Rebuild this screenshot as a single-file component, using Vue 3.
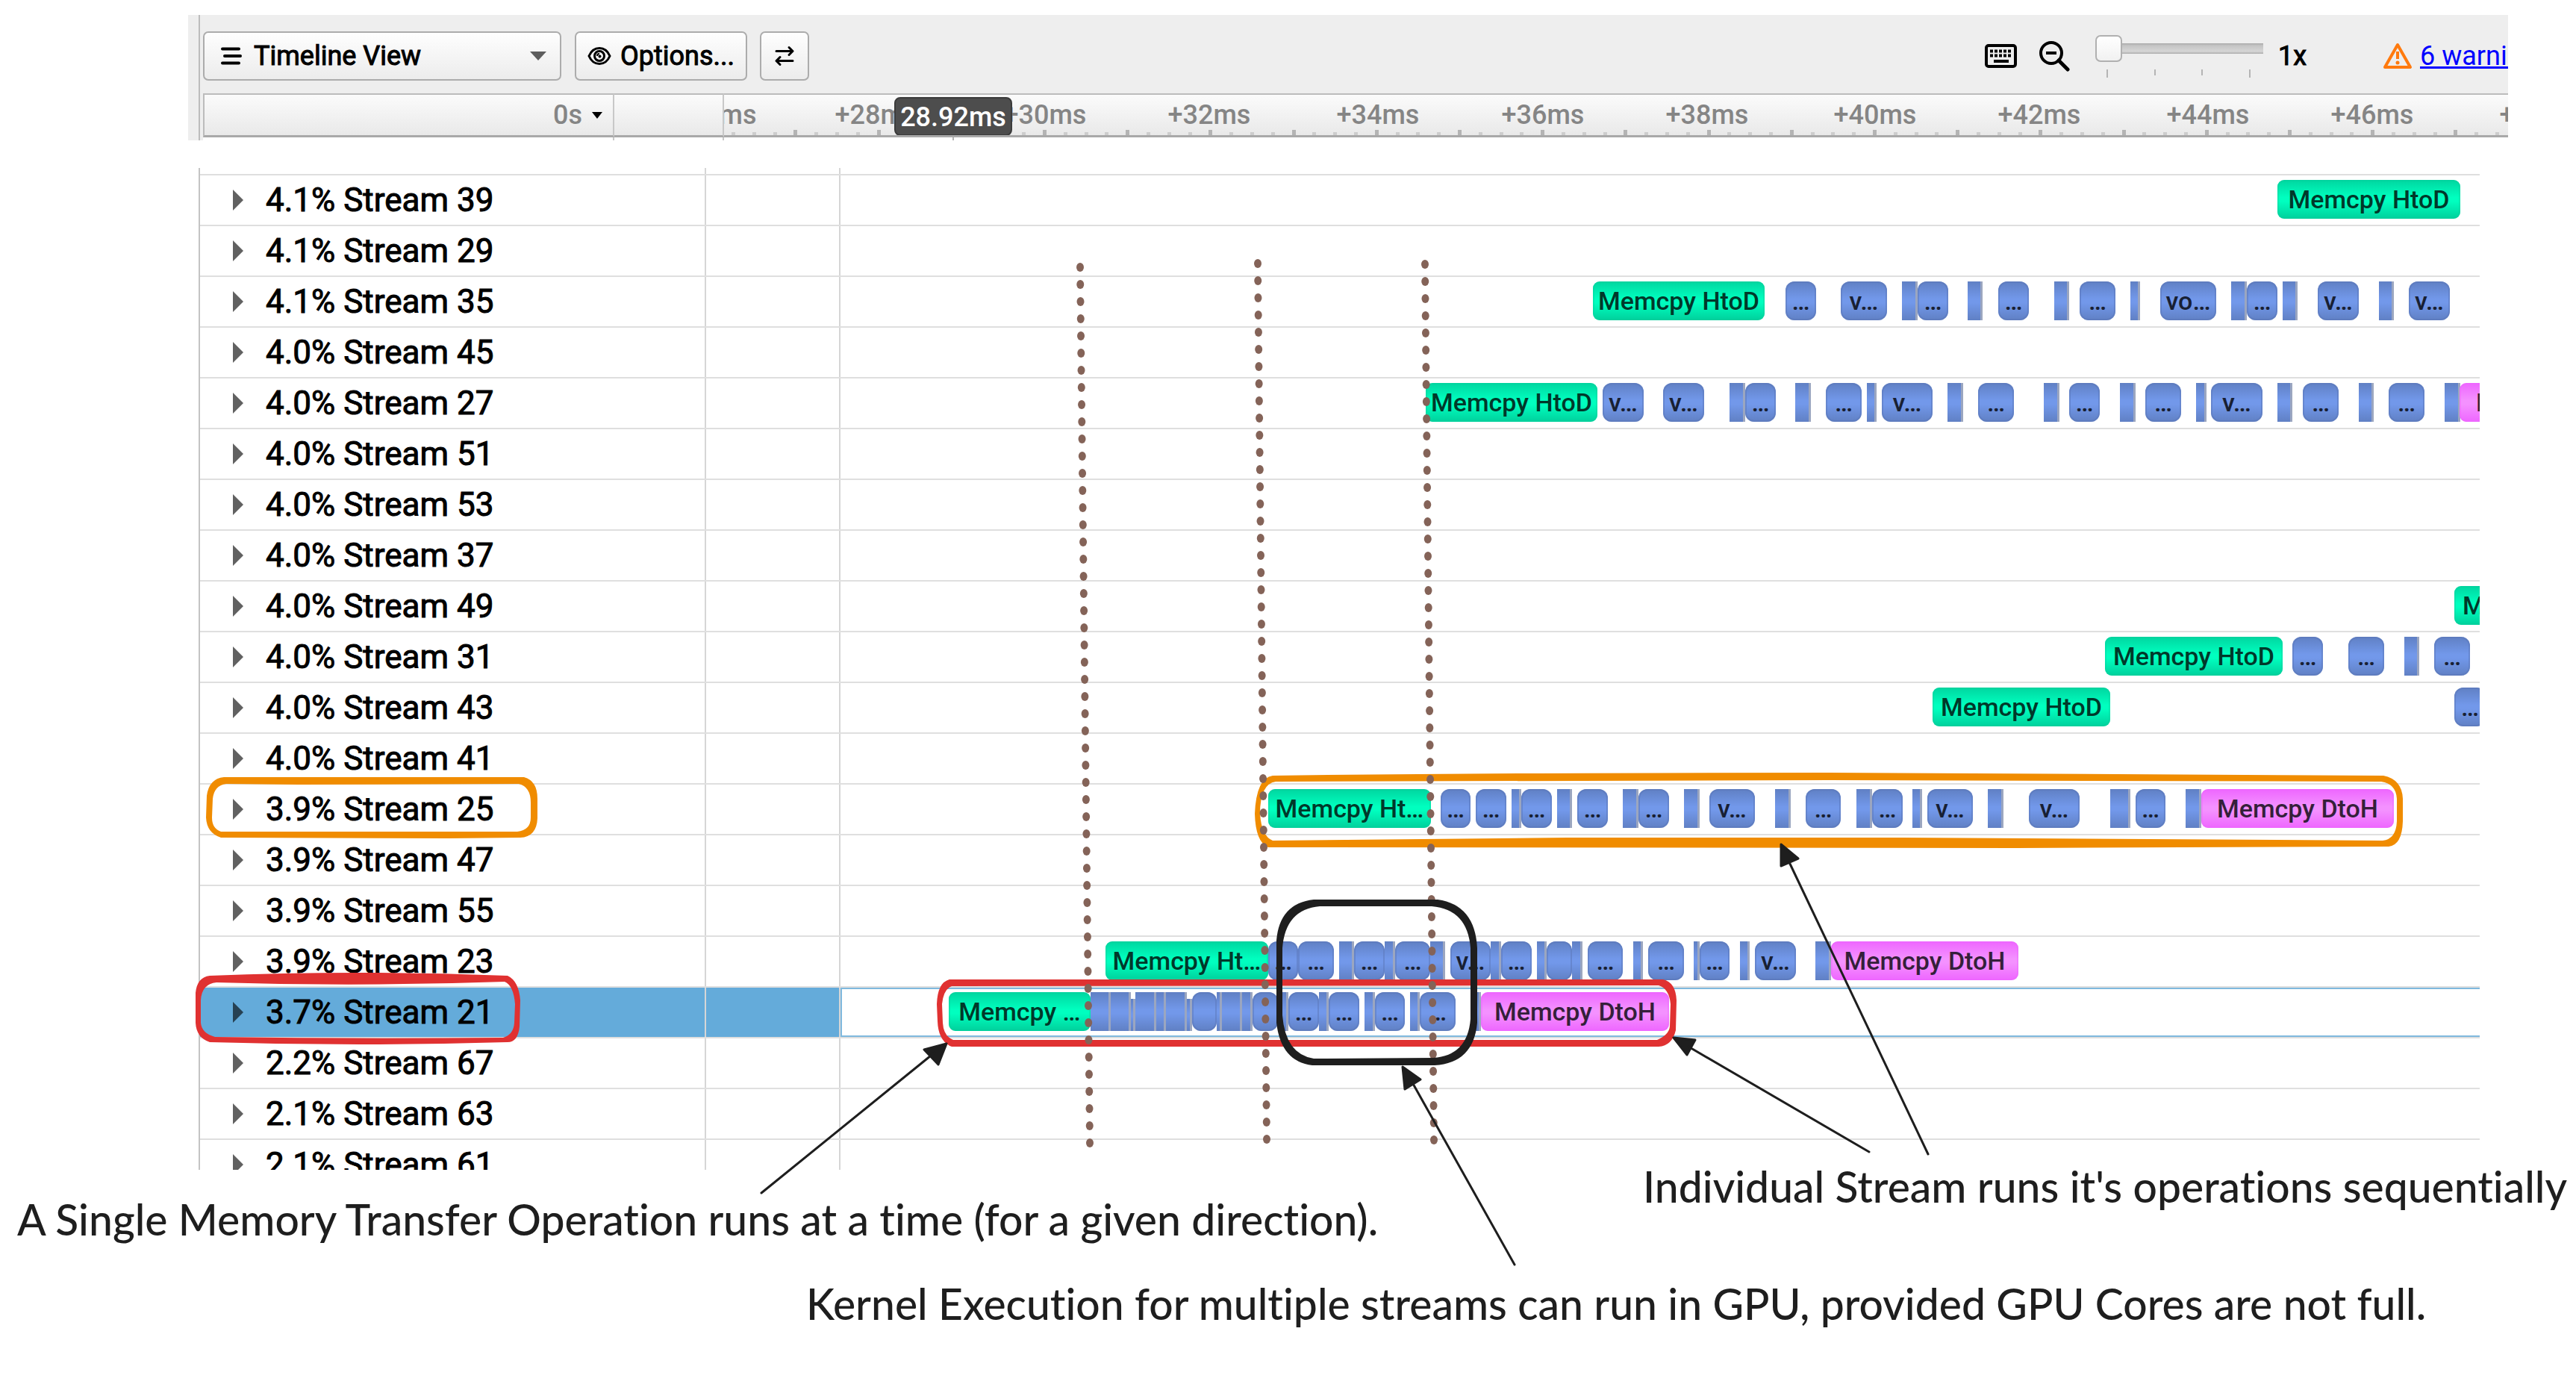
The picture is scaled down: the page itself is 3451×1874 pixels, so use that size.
<script setup>
import { ref } from 'vue'

const view = ref('Timeline View')
const zoom = ref(1)

// Ruler: labels sit on every second millisecond, minor marks every quarter.
const rulerStart = 970
const rulerWidth = 2390
const rulerPos = (x) => ((x - rulerStart) / rulerWidth) * 100 + '%'
const rulerLabels = [
  ['+26ms', 958], ['+28ms', 1174], ['+30ms', 1400], ['+32ms', 1620], ['+34ms', 1846],
  ['+36ms', 2067], ['+38ms', 2287], ['+40ms', 2512], ['+42ms', 2732], ['+44ms', 2958],
  ['+46ms', 3178], ['+48ms', 3404],
]
const ticks = Array.from({ length: 86 }, (_, i) => ({ x: 982 + i * 27.8, major: i % 4 === 3 }))

// Events: [start, end, kind, label]; h = host to device, d = device to host, k = kernel, t = thin kernel.
const trackStart = 1126
const trackWidth = 2196
const eventStyle = ([start, end]) => ({
  left: ((start - trackStart) / trackWidth) * 100 + '%',
  width: ((end - start) / trackWidth) * 100 + '%',
})
const kinds = { h: 'htod', d: 'dtoh', k: 'kernel', t: 'thin', s: 'thin short' }

const streams = [
  { name: '4.1% Stream 39', events: [[3051, 3296, 'h', 'Memcpy HtoD']] },
  { name: '4.1% Stream 29', events: [] },
  { name: '4.1% Stream 35', events: [
    [2134, 2364, 'h', 'Memcpy HtoD'], [2392, 2433, 'k', '…'], [2466, 2528, 'k', 'v…'], [2548, 2569, 't'],
    [2569, 2610, 'k', '…'], [2636, 2656, 't'], [2677, 2718, 'k', '…'], [2752, 2772, 't'], [2786, 2834, 'k', '…'],
    [2854, 2867, 't'], [2894, 2969, 'k', 'vo…'], [2989, 3010, 't'], [3010, 3051, 'k', '…'], [3058, 3078, 't'],
    [3105, 3160, 'k', 'v…'], [3187, 3207, 't'], [3227, 3282, 'k', 'v…']] },
  { name: '4.0% Stream 45', events: [] },
  { name: '4.0% Stream 27', events: [
    [1910, 2140, 'h', 'Memcpy HtoD'], [2147, 2202, 'k', 'v…'], [2228, 2283, 'k', 'v…'], [2317, 2338, 't'],
    [2338, 2379, 'k', '…'], [2405, 2426, 't'], [2446, 2494, 'k', '…'], [2501, 2514, 't'], [2521, 2589, 'k', 'v…'],
    [2609, 2630, 't'], [2650, 2698, 'k', '…'], [2738, 2759, 't'], [2772, 2813, 'k', '…'], [2840, 2861, 't'],
    [2874, 2922, 'k', '…'], [2942, 2956, 't'], [2962, 3031, 'k', 'v…'], [3051, 3071, 't'], [3085, 3133, 'k', '…'],
    [3160, 3180, 't'], [3200, 3248, 'k', '…'], [3275, 3296, 't'], [3295, 3555, 'd', 'Memcpy DtoH']] },
  { name: '4.0% Stream 51', events: [] },
  { name: '4.0% Stream 53', events: [] },
  { name: '4.0% Stream 37', events: [] },
  { name: '4.0% Stream 49', events: [[3288, 3526, 'h', 'Memcpy HtoD']] },
  { name: '4.0% Stream 31', events: [
    [2820, 3058, 'h', 'Memcpy HtoD'], [3071, 3112, 'k', '…'], [3146, 3194, 'k', '…'], [3221, 3241, 't'],
    [3261, 3309, 'k', '…']] },
  { name: '4.0% Stream 43', events: [[2589, 2827, 'h', 'Memcpy HtoD'], [3288, 3330, 'k', '…']] },
  { name: '4.0% Stream 41', events: [] },
  { name: '3.9% Stream 25', events: [
    [1699, 1917, 'h', 'Memcpy Ht…'], [1930, 1970, 'k', '…'], [1977, 2018, 'k', '…'], [2025, 2038, 't'],
    [2038, 2079, 'k', '…'], [2086, 2106, 't'], [2113, 2154, 'k', '…'], [2174, 2195, 't'], [2195, 2236, 'k', '…'],
    [2256, 2277, 't'], [2290, 2351, 'k', 'v…'], [2378, 2399, 't'], [2419, 2466, 'k', '…'], [2487, 2508, 't'],
    [2508, 2549, 'k', '…'], [2562, 2575, 't'], [2582, 2643, 'k', 'v…'], [2663, 2684, 't'], [2718, 2786, 'k', 'v…'],
    [2827, 2854, 't'], [2861, 2901, 'k', '…'], [2928, 2949, 't'], [2949, 3207, 'd', 'Memcpy DtoH']] },
  { name: '3.9% Stream 47', events: [] },
  { name: '3.9% Stream 55', events: [] },
  { name: '3.9% Stream 23', events: [
    [1481, 1699, 'h', 'Memcpy Ht…'], [1699, 1739, 'k', '…'], [1739, 1787, 'k', '…'], [1794, 1814, 't'],
    [1814, 1855, 'k', '…'], [1855, 1869, 't'], [1869, 1916, 'k', '…'], [1916, 1936, 't'], [1943, 1997, 'k', 'v…'],
    [1997, 2011, 't'], [2011, 2052, 'k', '…'], [2059, 2072, 't'], [2072, 2106, 'k', ''], [2106, 2120, 't'],
    [2127, 2174, 'k', '…'], [2188, 2201, 't'], [2208, 2256, 'k', '…'], [2269, 2277, 't'], [2277, 2317, 'k', '…'],
    [2331, 2344, 't'], [2351, 2406, 'k', 'v…'], [2432, 2453, 't'], [2453, 2704, 'd', 'Memcpy DtoH']] },
  { name: '3.7% Stream 21', selected: true, events: [
    [1271, 1461, 'h', 'Memcpy …'], [1461, 1488, 't'], [1488, 1515, 't'], [1515, 1521, 's'], [1521, 1549, 't'],
    [1549, 1562, 't'], [1562, 1590, 't'], [1590, 1597, 's'], [1597, 1630, 'k', ''], [1630, 1637, 't'],
    [1637, 1664, 't'], [1664, 1678, 't'], [1678, 1712, 'k', ''], [1712, 1726, 't'], [1726, 1767, 'k', '…'],
    [1767, 1780, 't'], [1780, 1821, 'k', '…'], [1828, 1842, 't'], [1842, 1882, 'k', '…'], [1889, 1902, 't'],
    [1902, 1950, 'k', '…'], [1970, 1984, 't'], [1984, 2236, 'd', 'Memcpy DtoH']] },
  { name: '2.2% Stream 67', events: [] },
  { name: '2.1% Stream 63', events: [] },
  { name: '2.1% Stream 61', events: [] },
]

// Dotted guides mark the end of each host-to-device copy.
const guides = [
  { x: 1447, y: 358, dx: 13, n: 52 },
  { x: 1685, y: 353, dx: 12, n: 52 },
  { x: 1909, y: 354, dx: 12, n: 52 },
]
</script>

<template>
  <main class="page">
    <section class="frame">
      <div class="toolbar">
        <div class="view-picker">
          <svg class="list-icon" width="28" height="24" viewBox="0 0 28 24" aria-hidden="true">
            <path d="M2 2.500H24M5 12H26M2 21.500H24" stroke="#000" stroke-width="4" stroke-linecap="round" />
          </svg>
          <select v-model="view" aria-label="View">
            <option>Timeline View</option>
          </select>
          <svg class="caret" width="22" height="12" viewBox="0 0 22 12" aria-hidden="true"><path d="M0 0H22L11 12Z" fill="#5e5e5e" /></svg>
        </div>
        <button class="tool options" type="button">
          <svg width="32" height="26" viewBox="0 0 32 26" fill="none" stroke="#000" aria-hidden="true">
            <path d="M2 13C5 6 10 2.500 16 2.500S27 6 30 13C27 20 22 23.500 16 23.500S5 20 2 13Z" stroke-width="3" />
            <circle cx="16" cy="13" r="6.500" stroke-width="3" />
            <path d="M13 13a3 3 0 0 1 3-3" stroke-width="2" />
            <circle cx="16.500" cy="13.500" r="2" fill="#000" stroke="none" />
          </svg>
          <span>Options...</span>
        </button>
        <button class="tool swap" type="button" aria-label="Swap">
          <svg width="28" height="28" viewBox="0 0 28 28" fill="none" stroke="#000" stroke-width="3" stroke-linecap="round" stroke-linejoin="round" aria-hidden="true">
            <path d="M3 7.500H25M20 2.500l5 5-5 5M25 20.500H3M8 15.500l-5 5 5 5" />
          </svg>
        </button>
        <div class="zoom-tools">
          <svg width="43" height="32" viewBox="0 0 43 32" aria-hidden="true">
            <rect x="2" y="2" width="39" height="28" rx="3" fill="none" stroke="#000" stroke-width="4" />
            <path d="M7 9.500H36M7 15.500H36" stroke="#000" stroke-width="4" stroke-dasharray="4 2" />
            <path d="M12 23H32" stroke="#000" stroke-width="4" />
          </svg>
          <svg class="magnifier" width="42" height="42" viewBox="0 0 42 42" fill="none" stroke="#000" aria-hidden="true">
            <circle cx="17" cy="17" r="14" stroke-width="4" />
            <path d="M10 17H24" stroke-width="4" />
            <path d="M27 27L39 39" stroke-width="5" stroke-linecap="round" />
          </svg>
          <div class="slider">
            <input v-model="zoom" type="range" min="1" max="4" step="1" aria-label="Zoom" />
            <div class="slider-marks"><i></i><i></i><i></i><i></i></div>
          </div>
          <output class="zoom-value">{{ zoom }}x</output>
          <svg class="warning" width="40" height="36" viewBox="0 0 40 36" aria-hidden="true">
            <path d="M20 3L37 33H3Z" fill="none" stroke="#ff7a0e" stroke-width="4" stroke-linejoin="round" />
            <path d="M20 12V22" stroke="#ff7a0e" stroke-width="4" />
            <circle cx="20" cy="27" r="2.500" fill="#ff7a0e" />
          </svg>
          <a class="warnings" href="#warnings">6 warnings</a>
        </div>
      </div>
      <div class="ruler">
        <div class="origin">0s <svg width="16" height="9" viewBox="0 0 16 9" aria-hidden="true"><path d="M1 0H15L8 9Z" fill="#000" /></svg></div>
        <div class="gap"></div>
        <div class="scale">
          <i v-for="t in ticks" :key="t.x" :class="['tick', { major: t.major }]" :style="{ left: rulerPos(t.x) }"></i>
          <span v-for="[label, x] in rulerLabels" :key="label" class="mark" :style="{ left: rulerPos(x) }">{{ label }}</span>
          <span class="cursor-time" :style="{ left: rulerPos(1277) }">28.92ms</span>
        </div>
      </div>
      <div class="under-ruler">
        <div class="origin"></div>
        <div class="gap"></div>
        <div class="scale"><i class="cursor-line" :style="{ left: rulerPos(1276) }"></i></div>
      </div>
    </section>

    <section class="streams">
      <div class="row spacer"><div class="name"></div><div class="mid"></div><div class="track"></div></div>
      <div v-for="s in streams" :key="s.name" :class="['row', { selected: s.selected }]">
        <div class="name">
          <button class="expand" type="button" :aria-label="'Expand ' + s.name">
            <svg width="14" height="28" viewBox="0 0 14 28" aria-hidden="true"><path d="M0 0L14 14L0 28Z" fill="#000" fill-opacity="0.620" /></svg>
          </button>
          <span>{{ s.name }}</span>
        </div>
        <div class="mid"></div>
        <div class="track">
          <div v-for="e in s.events" :key="e[0]" :class="['event', kinds[e[2]]]" :style="eventStyle(e)">{{ e[3] }}</div>
        </div>
      </div>
    </section>

    <section class="captions">
      <p class="sequential">Individual Stream runs it's operations sequentially</p>
      <p class="transfer">A Single Memory Transfer Operation runs at a time (for a given direction).</p>
      <p class="kernels">Kernel Execution for multiple streams can run in GPU, provided GPU Cores are not full.</p>
    </section>

    <svg class="annotations" viewBox="0 0 3451 1874" preserveAspectRatio="none" aria-hidden="true">
      <g fill="#f08c00" fill-rule="evenodd">
        <path d="M300 1041H702Q720 1046 720 1070V1096Q719 1121 697 1122L600 1123L296 1122Q277 1116 276 1095L277 1066Q280 1043 300 1041ZM303 1050L400 1051L695 1050Q711 1054 711 1075V1095Q711 1112 693 1114H296Q284 1110 284 1095L285 1070Q287 1052 303 1050Z" />
        <path d="M1705 1039Q2000 1035 2450 1035L3193 1039Q3218 1044 3219 1070V1100Q3218 1132 3200 1134L2700 1136L1699 1135Q1682 1128 1681 1090Q1683 1042 1705 1039ZM1709 1047L2450 1045L3190 1047Q3210 1050 3211 1070V1100Q3210 1124 3192 1126L2550 1122H2100L1705 1126Q1690 1120 1688 1090Q1688 1050 1709 1047Z" />
      </g>
      <g fill="#e03131" fill-rule="evenodd">
        <path d="M281 1307Q480 1299 680 1307Q695 1314 697 1340L696 1375Q694 1396 680 1396Q480 1402 281 1396Q263 1390 262 1370V1330Q264 1309 281 1307ZM290 1316Q480 1322 676 1315Q688 1320 690 1345L689 1370Q688 1386 674 1390Q480 1392 288 1389Q270 1384 269 1370V1340Q270 1318 290 1316Z" />
        <path d="M1272 1312H2228Q2245 1316 2246 1340L2245 1380Q2240 1401 2222 1402H1275Q1257 1395 1256 1368L1255 1345Q1256 1316 1272 1312ZM1275 1321L2222 1320Q2236 1324 2238 1345L2237 1375Q2236 1386 2220 1393H1277Q1264 1388 1263 1370L1262 1345Q1264 1325 1275 1321Z" />
      </g>
      <g fill="#846358">
        <template v-for="g in guides" :key="g.x">
          <ellipse v-for="i in g.n" :key="i" :cx="g.x + (g.dx * (i - 1)) / (g.n - 1)" :cy="g.y + (i - 1) * 23" rx="5" ry="6" />
        </template>
      </g>
      <path fill="#1e1e1e" fill-rule="evenodd" d="M1760 1205H1926Q1976 1212 1979 1270V1370Q1974 1424 1922 1427H1758Q1716 1422 1710 1370V1260Q1714 1210 1760 1205ZM1768 1214H1918Q1966 1218 1970 1270V1365Q1966 1414 1920 1417L1760 1418Q1722 1412 1718 1360V1270Q1722 1218 1768 1214Z" />
      <g fill="#1e1e1e" stroke="#1e1e1e" stroke-width="3" stroke-linecap="round" stroke-linejoin="round">
        <path d="M1020 1598L1252 1410M1268 1398L1238 1406L1257 1426Z" />
        <path d="M2029 1694L1892 1450M1879 1429L1882 1459L1903 1446Z" />
        <path d="M2504 1543L2262 1402M2242 1390L2271 1393L2260 1413Z" />
        <path d="M2583 1546L2397 1155M2386 1131V1160L2409 1150Z" />
      </g>
    </svg>
  </main>
</template>

<style>
body {
  margin: 0;
  background: #fff;
}
</style>

<style scoped>
.page {
  position: relative;
  padding: 20px 0 106px;
  font-family: Roboto, "Liberation Sans", sans-serif;
  font-weight: 500;
  font-size: 36px;
  color: #000;
}
.frame {
  margin: 0 91px 0 252px;
  padding-left: 14px;
  background: #eee;
}
.toolbar {
  display: flex;
  align-items: center;
  height: 66px;
  padding: 22px 0 17px 4px;
  border-left: 2px solid #bcbcbc;
  font-weight: 400;
  -webkit-text-stroke: 1px;
}
.view-picker {
  position: relative;
  width: 480px;
  margin-right: 18px;
}
.view-picker select {
  appearance: none;
  box-sizing: border-box;
  width: 100%;
  height: 66px;
  padding: 0 60px 0 66px;
  border: 2px solid #acacac;
  border-radius: 7px;
  background: linear-gradient(#fefefe, #ececec);
  font: inherit;
  color: inherit;
}
.list-icon,
.caret {
  position: absolute;
  top: 21px;
  left: 24px;
  pointer-events: none;
}
.caret {
  top: 27px;
  right: 20px;
  left: auto;
}
.tool {
  display: flex;
  align-items: center;
  justify-content: center;
  box-sizing: border-box;
  height: 66px;
  padding: 0;
  border: 2px solid #acacac;
  border-radius: 7px;
  background: linear-gradient(#fefefe, #ececec);
  font: inherit;
  color: inherit;
}
.options {
  gap: 12px;
  width: 231px;
  margin-right: 17px;
}
.swap {
  width: 66px;
}
.zoom-tools {
  display: flex;
  align-items: center;
  height: 66px;
  margin-left: auto;
}
.magnifier {
  margin: 0 34px 0 29px;
}
.slider {
  width: 225px;
  padding-top: 2px;
}
.slider input {
  appearance: none;
  display: block;
  width: 225px;
  height: 36px;
  margin: 0;
  border-radius: 4px;
  background: linear-gradient(#a9a9a9, #c4c4c4 3px, #d6d6d6 11px, #a9a9a9) center / 225px 14px no-repeat;
}
.slider input::-webkit-slider-thumb {
  appearance: none;
  box-sizing: border-box;
  width: 36px;
  height: 36px;
  border: 2px solid #b0b0b0;
  border-radius: 7px;
  background: linear-gradient(#fff, #f1f1f1);
}
.slider-marks {
  display: flex;
  justify-content: space-between;
  height: 12px;
  padding: 10px 17px 0 15px;
}
.slider-marks i {
  width: 2px;
  height: 8px;
  background: #b4b4b4;
}
.slider-marks i:first-child,
.slider-marks i:last-child {
  height: 11px;
}
.zoom-value {
  width: 140px;
  margin-left: 20px;
}
.warnings {
  width: 118px;
  margin-left: 10px;
  overflow: hidden;
  white-space: nowrap;
  color: #00f;
  -webkit-text-stroke: 0;
}
.ruler,
.under-ruler {
  display: grid;
  grid-template-columns: 551px 147px 1fr;
  border-left: 2px solid #bcbcbc;
  padding-left: 4px;
}
.ruler > * {
  box-sizing: border-box;
  height: 59px;
  border-top: 2px solid #bcbcbc;
  border-bottom: 3px solid #a9a9a9;
  background: linear-gradient(#fbfbfb, #e9e9e9);
  line-height: 54px;
  color: #858585;
}
.origin,
.gap {
  border-right: 2px solid #c8c8c8;
}
.under-ruler > * {
  height: 4px;
  background-color: #fff;
}
.origin {
  display: flex;
  align-items: center;
  justify-content: flex-end;
  gap: 12px;
  padding-right: 13px;
}
.ruler .origin {
  border-left: 2px solid #bcbcbc;
}
.scale {
  position: relative;
  overflow: hidden;
}
.tick {
  position: absolute;
  bottom: 0;
  width: 5px;
  height: 4px;
  margin-left: -2px;
  background: #cdcdcd;
}
.tick.major {
  height: 7px;
  background: #b4b4b4;
}
.mark {
  position: absolute;
  top: 0;
  transform: translateX(-50%);
}
.cursor-time {
  position: absolute;
  top: 3px;
  box-sizing: border-box;
  width: 158px;
  height: 52px;
  margin-left: -79px;
  border: 2px solid #3b3b3b;
  border-radius: 8px;
  background: #4d4d4d;
  line-height: 50px;
  text-align: center;
  color: #fff;
}
.cursor-line {
  position: absolute;
  width: 2px;
  height: 4px;
  background: #b4b4b4;
}
.streams {
  max-height: 1342px;
  margin: 37px 129px 0 266px;
  overflow: hidden;
  border-left: 2px solid #c4c4c4;
}
.row {
  display: grid;
  grid-template-columns: 678px 180px 1fr;
  height: 66px;
  border-top: 2px solid #dfdfdf;
}
.row.spacer {
  height: 8px;
  border-top: 0;
}
.name,
.mid {
  border-right: 2px solid #d6d6d6;
}
.name {
  display: flex;
  align-items: center;
  gap: 30px;
  padding-left: 44px;
  font-size: 44px;
  font-weight: 400;
  -webkit-text-stroke: 1px;
}
.expand {
  display: flex;
  padding: 0;
  border: 0;
  background: none;
}
.track {
  position: relative;
  overflow: hidden;
}
.selected .name,
.selected .mid {
  background: #64abda;
}
.selected .track {
  box-shadow: inset 0 2px #7fb9de, inset 0 -2px #7fb9de, inset 2px 0 #7fb9de;
}
.event {
  position: absolute;
  top: 6px;
  box-sizing: border-box;
  height: 52px;
  overflow: hidden;
  border-radius: 12px;
  line-height: 52px;
  font-size: 34px;
  text-align: center;
  white-space: nowrap;
}
.htod {
  border-radius: 9px;
  background: linear-gradient(#00d6a0, #00ffbf 45%, #00ffbf 55%, #00d09c);
  box-shadow: inset 0 0 0 2px #00cf9b66;
  color: #00382a;
}
.dtoh {
  border-radius: 9px;
  background: linear-gradient(#ee66ff, #f491ff 45%, #f491ff 55%, #ee66ff);
  box-shadow: inset 0 0 0 2px #ee66ff66;
  color: #351f3a;
}
.kernel {
  background: linear-gradient(#6080c4, #7298ea 45%, #7298ea 55%, #6080c4);
  box-shadow: inset 0 0 0 2px #5b78ba88;
  color: #182033;
}
.thin {
  border-right: 3px solid #9ba6c0;
  border-radius: 0;
  background: linear-gradient(#6080c4, #7298ea 45%, #7298ea 55%, #6080c4);
}
.short {
  top: 15px;
  height: 43px;
}
.captions {
  display: flex;
  flex-direction: column;
  font-family: Lato, "Noto Sans", sans-serif;
  font-size: 57px;
  font-variant-ligatures: none;
  line-height: 44px;
  color: #1e1e1e;
}
.captions p {
  margin: 0;
  white-space: nowrap;
}
.captions .sequential {
  align-self: flex-end;
  margin-right: 12px;
}
.captions .transfer {
  margin-left: 23px;
}
.captions .kernels {
  margin: 69px 0 0 1080px;
}
.annotations {
  position: absolute;
  top: 0;
  left: 0;
  width: 100%;
  height: 1874px;
  pointer-events: none;
}
</style>
